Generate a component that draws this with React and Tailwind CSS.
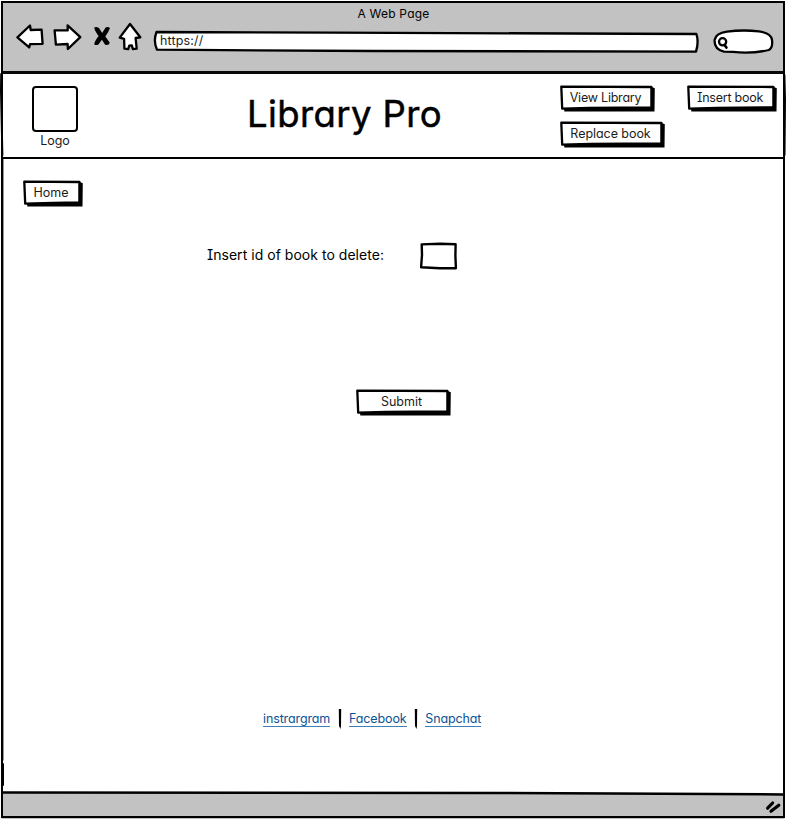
import React from "react";

const ink = { stroke: "#000", strokeLinejoin: "round", strokeLinecap: "round" };

function SketchButton({ w, className = "", textClass = "", children }) {
  return (
    <button className={`relative flex h-[27px] items-start justify-center ${className}`} style={{ width: w }}>
      <svg className="absolute inset-0" width={w} height="27" viewBox={`0 0 ${w} 27`} aria-hidden="true">
        <path d={`M4 22 L4.3 26.4 L${w - 0.5} 26.4 L${w - 0.2} 3.3 L${w - 2} 2.6 L${w - 4} 1.8 Z`} fill="#000" />
        <path d={`M1.3 1.7 L${w - 3.6} 2 L${w - 3.6} 22.4 L30 23 L2.2 23.6 Z`} fill="#fff" strokeWidth="2.3" {...ink} />
      </svg>
      <span className={`relative mr-[4px] mt-[5px] whitespace-nowrap text-[12.5px] leading-4 text-[#1c1c1c] ${textClass}`}>{children}</span>
    </button>
  );
}

function BrowserBar() {
  return (
    <header className="flex h-[71px] shrink-0 flex-col border-b-[3px] border-[#080808] bg-[#c2c2c2]">
      <div className="mt-[3px] pl-[1px] text-center text-[12px] leading-4 tracking-[0.2px]">A Web Page</div>
      <nav className="flex items-start pl-[13px] pt-[1px]">
        <svg width="28" height="28" viewBox="0 0 28 28" fill="#fff" strokeWidth="2.3" {...ink}>
          <path d="M1.4 14.3 L14 2.5 L14.7 7 L25.6 6.6 L26.6 20.8 L14 21.2 L13.2 24.4 Z" />
        </svg>
        <svg width="30" height="28" viewBox="0 0 30 28" className="ml-[8px]" fill="#fff" strokeWidth="2.3" {...ink}>
          <path d="M2.6 7.3 L15.7 7.4 L15.6 2.3 L28.3 14.2 L15.9 26 L15.6 21 L3.9 21.6 Z" />
        </svg>
        <svg width="18" height="22" viewBox="0 0 18 22" className="ml-[11px] mt-[3px]">
          <path d="M1.2 1.6 Q3 .2 6 2 L9.2 7 L12.6 1.4 Q15 .6 17 2 Q15.6 6 12.3 10.5 L16.7 16.4 L15.9 18.6 Q13 19.4 12 18.4 L8.9 13.8 L5.4 18.4 Q3 19.8 1.2 18.2 Q1.4 15.6 5.6 10 Q1.6 5 1.2 1.6 Z" fill="#000" />
        </svg>
        <svg width="24" height="29" viewBox="0 0 24 29" className="ml-[7px] -mt-px" fill="#fff" strokeWidth="2.3" {...ink}>
          <path d="M12 2 L22.3 15.3 L17.6 16 L18.7 26.6 L14.8 27 L13.8 23.4 L11.2 23.7 L10.2 27.2 L6.4 26.7 L6.1 16.8 L1.7 15.6 Z" />
        </svg>
        <div className="relative ml-[11px] mt-[7px] h-[23px] w-[547px]">
          <svg className="absolute inset-0" width="547" height="23" viewBox="0 0 547 23" fill="#fff" strokeWidth="2.3" {...ink}>
            <path d="M3.5 2 L180 2.6 L543.4 4 Q546 12 543 21.6 L220 21 L4 19.7 Q0 11 3.5 2 Z" />
          </svg>
          <span className="absolute left-[7px] top-[3px] text-[12.5px] leading-4 tracking-[0.15px] text-[#222]">https://</span>
        </div>
        <svg width="62" height="27" viewBox="0 0 62 27" className="ml-[12px] mt-[5px]" fill="#fff" strokeWidth="2.3" {...ink}>
          <path d="M2.6 12 Q3.6 5.3 15 3.7 Q30 1.5 47 3.3 Q59.3 5 60 12 Q61 20 56.8 22 Q40 25.8 21 23.9 L12 23.6 Q2 21.5 2.6 12 Z" />
          <circle cx="10.6" cy="13.8" r="3.6" />
          <path d="M12.6 17 L14.4 19.6" strokeWidth="2.6" />
        </svg>
      </nav>
    </header>
  );
}

function SiteHeader() {
  return (
    <section className="flex h-[85px] shrink-0 border-b-2 border-black">
      <div className="ml-[29px] mt-[12px] flex w-[46px] flex-col items-center">
        <div className="h-[46px] w-[46px] rounded-[4px] border-2 border-black" />
        <span className="mt-[1px] text-[12.5px] leading-4 text-[#1c1c1c]">Logo</span>
      </div>
      <h1 className="ml-[169px] mt-[18px] w-[200px] whitespace-nowrap text-[36.5px] font-normal leading-[44px] tracking-[0.4px] [-webkit-text-stroke:0.5px_#000] [stroke-linejoin:round]">Library Pro</h1>
      <div className="ml-[113px] mt-[11px] flex w-[217px] flex-wrap content-start justify-between gap-y-[9px]">
        <SketchButton w={95} textClass="tracking-[-0.22px]">View Library</SketchButton>
        <SketchButton w={90} textClass="tracking-[-0.25px]">Insert book</SketchButton>
        <SketchButton w={105} textClass="tracking-[-0.05px]">Replace book</SketchButton>
      </div>
    </section>
  );
}

const links = ["instrargram", "Facebook", "Snapchat"];

export default function App() {
  return (
    <div className="relative h-[820px] w-[786px] overflow-hidden bg-white pl-[1px] pr-[1px] pt-[1px] text-black [font-family:Inter,'Liberation_Sans',sans-serif] [font-feature-settings:'cv11','cv08']">
      <div className="flex h-[817px] flex-col border-2 border-black">
        <BrowserBar />
        <SiteHeader />
        <main className="flex min-h-0 flex-1 flex-col">
          <SketchButton w={60} className="ml-[20px] mt-[21px]">Home</SketchButton>
          <label className="ml-[204px] mt-[35px] flex h-[28px] items-center">
            <span className="w-[213px] whitespace-nowrap pb-[2px] text-[14px] leading-5 tracking-[0.03px]">Insert id of book to delete:</span>
            <svg width="38" height="28" viewBox="0 0 38 28" fill="#fff" strokeWidth="2.4" {...ink}>
              <path d="M1.7 2.4 L20 1.7 L35.6 2.3 L35.4 14 L35.9 26.3 L20 26.2 L1.1 25.2 L2 13 Z" />
            </svg>
          </label>
          <SketchButton w={95} className="ml-[353px] mt-[119px]">Submit</SketchButton>
          <nav className="ml-[260px] mt-[292px] flex h-[22px] items-center text-[12.5px] leading-4 tracking-[-0.12px] text-[#0b5394]">
            {links.map((name, i) => (
              <React.Fragment key={name}>
                {i > 0 && (
                  <svg width="4" height="22" viewBox="0 0 4 22" className="mx-[7.4px]">
                    <path d="M.8 1 L3.2 1 L3 18 L2.5 21 L1 18 Z" fill="#000" />
                  </svg>
                )}
                <a className="whitespace-nowrap border-b border-[#3f7fb8] leading-[14px]">{name}</a>
              </React.Fragment>
            ))}
          </nav>
        </main>
        <footer className="relative flex h-[24px] shrink-0 items-center justify-end bg-[#c2c2c2] pr-[1px]">
          <svg className="absolute -top-[1px] left-0" width="780" height="5" viewBox="0 0 780 5" preserveAspectRatio="none">
            <path d="M0 0 H780 V3 L500 1 L0 0 Z" fill="#fff" />
            <path d="M0 1.4 L500 2 L780 3.4" fill="none" strokeWidth="2.5" {...ink} />
          </svg>
          <svg width="18" height="16" viewBox="0 0 18 16" className="mt-[5px]" {...ink} strokeWidth="3.2">
            <path d="M3.6 9.2 L8.6 4 M7 12.2 L14.8 6.2" />
          </svg>
        </footer>
      </div>
      <svg className="pointer-events-none absolute inset-0" width="786" height="820" viewBox="0 0 786 820" aria-hidden="true">
        <path d="M1.2 74 L1 91 L2.4 155 M784.4 75 L785 100 L784.5 155 M3 764 V785 M2.4 158 V760 M2 817.3 H784" fill="none" strokeWidth="2" {...ink} />
      </svg>
    </div>
  );
}
